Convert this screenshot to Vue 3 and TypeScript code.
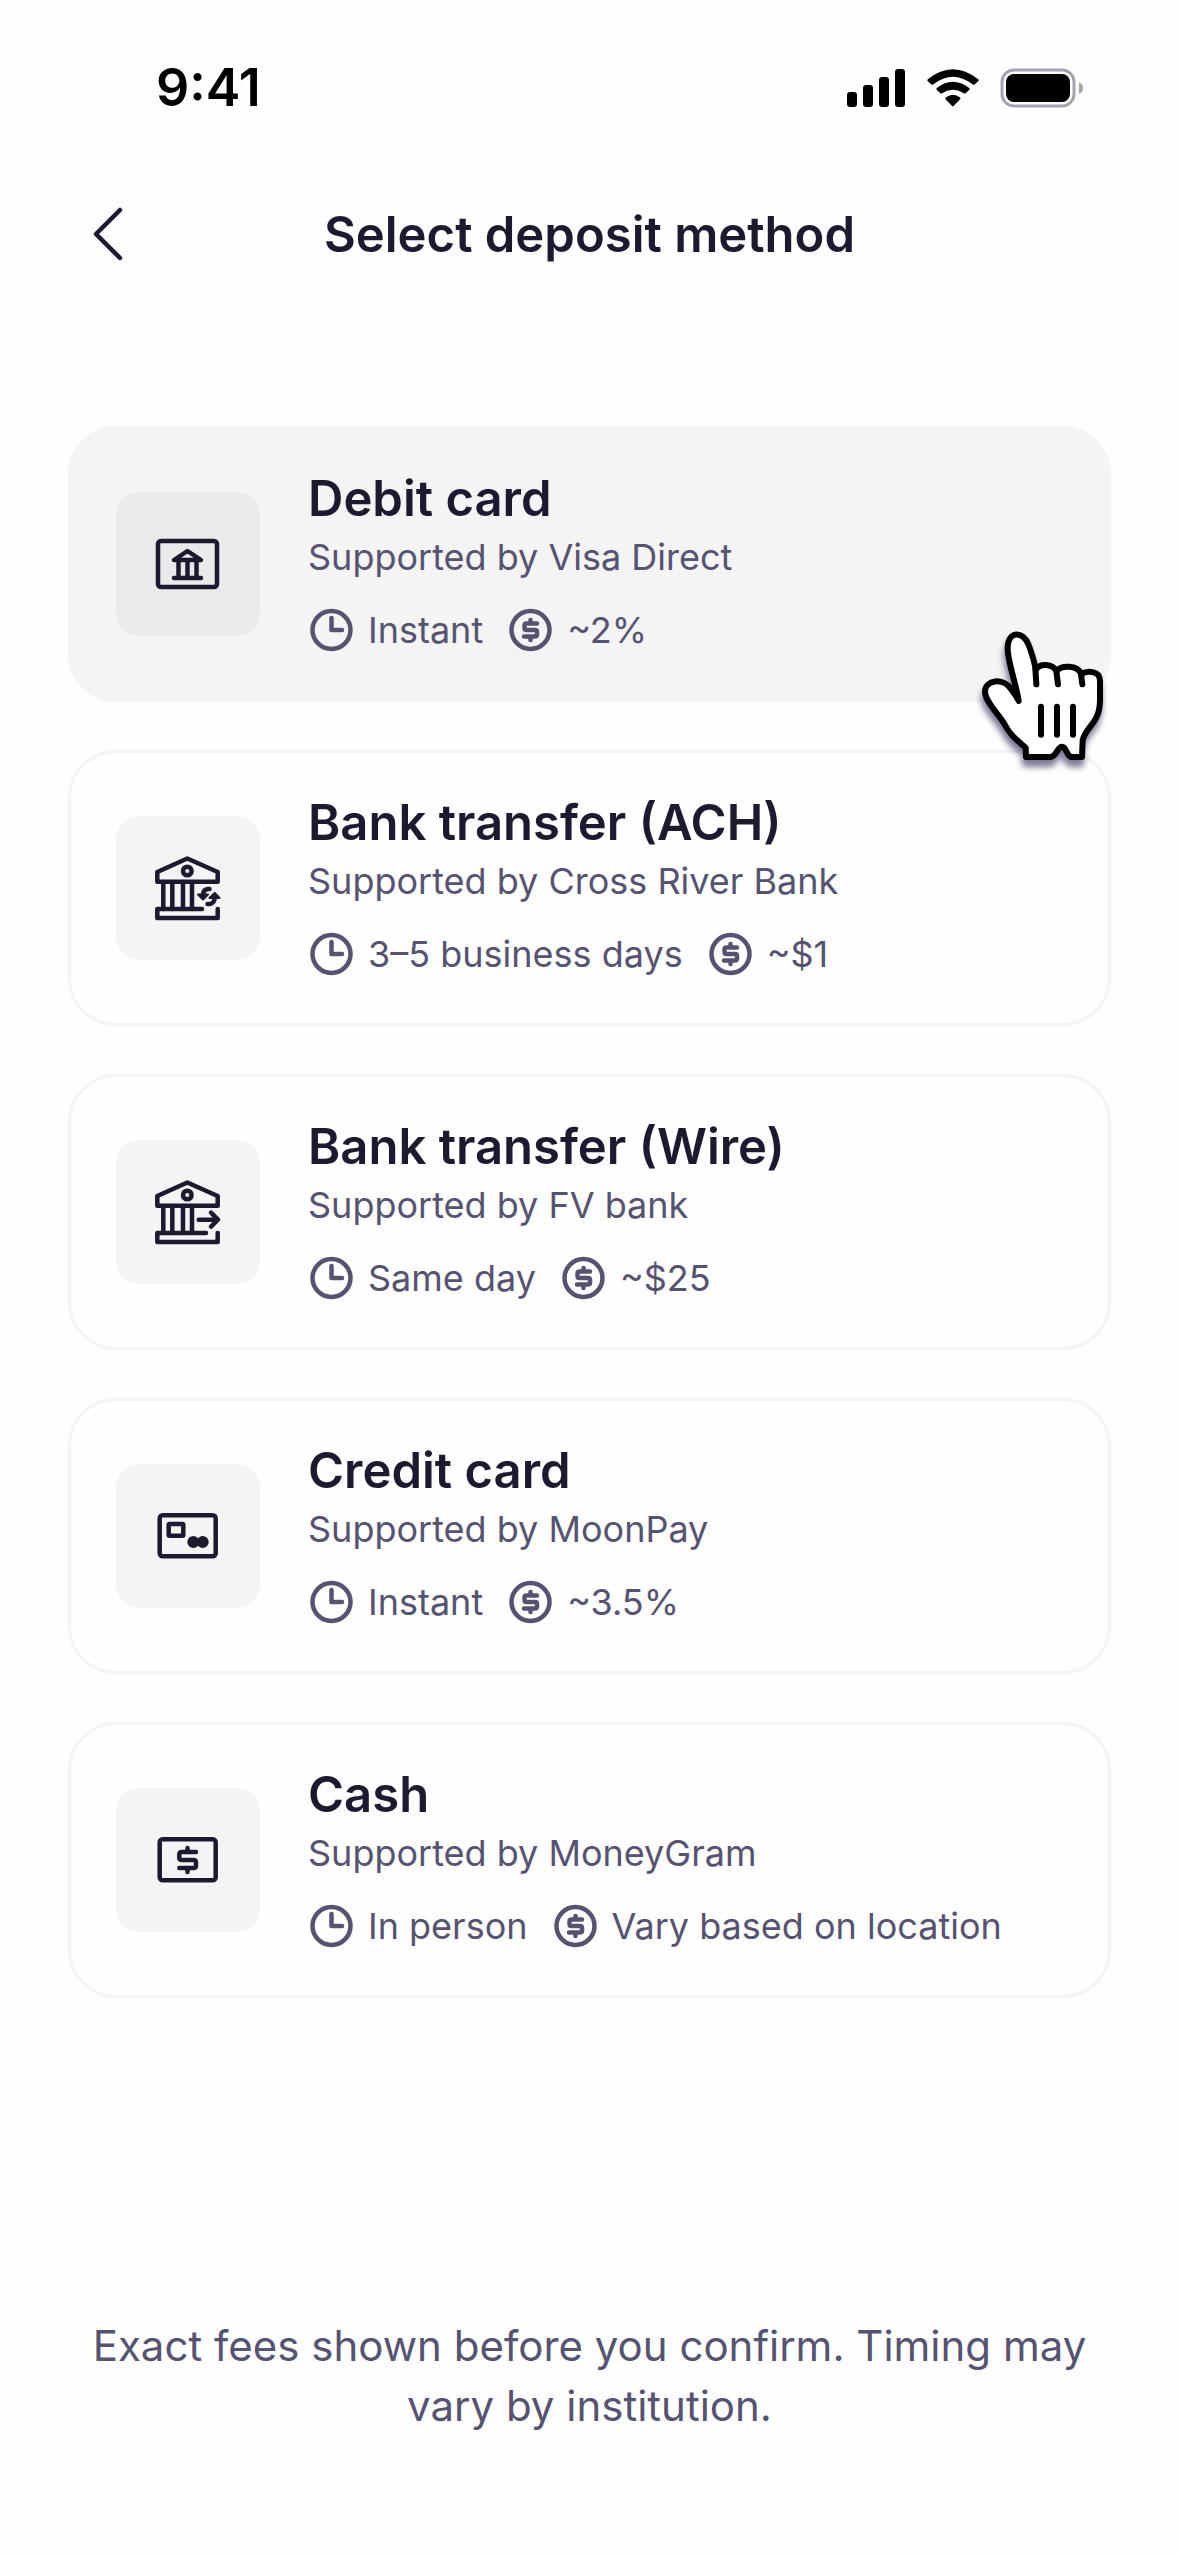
<script setup lang="ts">
type IconName = 'debit' | 'ach' | 'wire' | 'credit' | 'cash'

interface DepositMethod {
  id: IconName
  title: string
  provider: string
  timing: string
  fee: string
}

const methods: DepositMethod[] = [
  { id: 'debit', title: 'Debit card', provider: 'Visa Direct', timing: 'Instant', fee: '~2%' },
  { id: 'ach', title: 'Bank transfer (ACH)', provider: 'Cross River Bank', timing: '3–5 business days', fee: '~$1' },
  { id: 'wire', title: 'Bank transfer (Wire)', provider: 'FV bank', timing: 'Same day', fee: '~$25' },
  { id: 'credit', title: 'Credit card', provider: 'MoonPay', timing: 'Instant', fee: '~3.5%' },
  { id: 'cash', title: 'Cash', provider: 'MoneyGram', timing: 'In person', fee: 'Vary based on location' },
]

const activeId: IconName = 'debit'
</script>

<template>
  <div class="screen">
    <div class="status-bar">
      <span class="time">9:41</span>
      <div class="status-icons">
        <svg width="59" height="38" viewBox="0 0 59 38" aria-hidden="true">
          <rect x="0" y="23" width="10" height="15" rx="3" />
          <rect x="16" y="16" width="10" height="22" rx="3" />
          <rect x="32" y="8" width="10" height="30" rx="3" />
          <rect x="48" y="0" width="10" height="38" rx="3" />
        </svg>
        <svg width="52" height="38" viewBox="383 91 155 114" aria-hidden="true">
          <path d="M385 122Q460 62 536 122Q539 125 536 128L526 137Q523 140 519 137Q460 92 402 137Q398 140 395 137L385 128Q382 125 385 122Z" />
          <path d="M412 148Q460 110 509 148Q512 151 509 154L499 163Q496 166 492 163Q460 143 429 163Q425 166 422 163L412 154Q409 151 412 148Z" />
          <path d="M440 176Q460 160 481 176Q485 179 482 182L463 201Q460 204 457 201L438 182Q436 179 440 176Z" />
        </svg>
        <svg width="84" height="40" viewBox="0 0 84 40" aria-hidden="true">
          <rect x="2" y="2" width="72" height="36" rx="12" fill="none" stroke="#a6a3b1" stroke-width="3" />
          <rect x="6" y="6" width="64" height="28" rx="8" />
          <path d="M79 14Q83 16 83 20Q83 24 79 26Z" fill="#a6a3b1" />
        </svg>
      </div>
    </div>

    <header class="header">
      <button class="back" type="button" aria-label="Back">
        <svg width="36" height="56" viewBox="0 0 36 56" aria-hidden="true">
          <path d="M30 3L6 27L30 51" />
        </svg>
      </button>
      <h1>Select deposit method</h1>
    </header>

    <main>
      <ul class="methods">
        <li v-for="method in methods" :key="method.id">
          <button class="card" :class="{ active: method.id === activeId }" type="button">
            <span class="tile">
              <svg width="72" height="72" viewBox="0 0 72 72" aria-hidden="true">
                <template v-if="method.id === 'debit'">
                  <rect x="6" y="13" width="59" height="46" rx="3" />
                  <path d="M22 32L35.500 23L49 32ZM22 50H49M26.500 33V49M35.500 33V49M44.500 33V49" />
                </template>
                <template v-if="method.id === 'ach' || method.id === 'wire'">
                  <path d="M5.300 29.700V20L35.300 6.500L65.700 20V29.700Z" />
                  <circle cx="35.300" cy="19" r="4.300" />
                  <path d="M11.300 30V57M20.300 30V57M31 30V57M40 30V57" />
                </template>
                <template v-if="method.id === 'ach'">
                  <path d="M50 57H5.300V66H65.700V57" />
                  <path d="M57.500 37H56Q51.500 37.500 51 42M55.500 52H58Q62.500 51 62.700 46" />
                  <path class="solid small" d="M46 42.500H56L51 47.500ZM57.500 46H67.500L62.700 41Z" />
                </template>
                <template v-if="method.id === 'wire'">
                  <path d="M54 57H5.300V66H65.700V57" />
                  <path d="M46.700 43.700H65.700M59 36.700L66 43.700L59 50.700" />
                </template>
                <template v-if="method.id === 'credit'">
                  <rect x="7.700" y="15.300" width="56" height="41" rx="3" />
                  <rect x="16.700" y="24" width="14.600" height="11.700" rx="1" />
                  <circle class="solid small" cx="41.300" cy="42" r="5" />
                  <circle class="solid small" cx="50.700" cy="42" r="5" />
                </template>
                <template v-if="method.id === 'cash'">
                  <rect x="7.700" y="15.300" width="56" height="41" rx="3" />
                  <path d="M44 28H30Q27.300 28 27.300 30.500V33.500Q27.300 36 30 36H41.500Q44 36 44 38.500V41.500Q44 44 41.500 44H27.300M35.500 24V28M35.500 44V48" />
                </template>
              </svg>
            </span>
            <span class="body">
              <span class="title">{{ method.title }}</span>
              <span class="provider">Supported by {{ method.provider }}</span>
              <span class="meta">
                <span class="fact">
                  <svg width="48" height="48" viewBox="0 0 48 48" aria-hidden="true">
                    <circle cx="23.500" cy="24" r="19" />
                    <path d="M23.500 12V24H34" />
                  </svg>
                  {{ method.timing }}
                </span>
                <span class="fact">
                  <svg width="48" height="48" viewBox="0 0 48 48" aria-hidden="true">
                    <circle cx="23.500" cy="24" r="19" />
                    <path d="M30 17.500H19.500Q17.500 17.500 17.500 19.500V22Q17.500 24 19.500 24H28Q30 24 30 26V28.500Q30 30.500 28 30.500H17M23.500 14V17M23.500 31V34" />
                  </svg>
                  {{ method.fee }}
                </span>
              </span>
            </span>
          </button>
          <svg v-if="method.id === activeId" class="pointer" width="135" height="150" viewBox="108 84 405 450" aria-hidden="true">
            <path
              class="hand"
              d="M236 303C228 250 203 185 203 145C203 90 250 92 266 135C278 165 283 190 288 208C300 190 337 190 350 214C362 195 412 194 424 222C440 212 480 210 480 242V300C480 370 440 375 428 420L426 471H393C376 463 380 440 366 440C352 440 352 465 333 471H258L257 443C230 420 210 405 195 375C175 340 135 305 135 275C135 240 190 230 215 270Q230 288 236 303Z"
            />
            <path class="crease" d="M286 205L289 253M349 214L354 253M423 222L427 253M303 320V404M351 320V404M399 320V404" />
          </svg>
        </li>
      </ul>
    </main>

    <footer>
      <p>Exact fees shown before you confirm. Timing may vary by institution.</p>
    </footer>
  </div>
</template>

<style>
body {
  margin: 0;
  background: #fefefe;
}
</style>

<style scoped>
.screen {
  display: flex;
  flex-direction: column;
  min-height: 100vh;
  box-sizing: border-box;
  background: #fefefe;
  color: #1e192e;
  font-family: Inter, "Liberation Sans", sans-serif;
}

.status-bar {
  display: flex;
  align-items: center;
  justify-content: space-between;
  height: 176px;
  padding: 0 95px 0 156px;
  color: #000;
}

.time {
  font-size: 52px;
  font-weight: 600;
  line-height: 60px;
}

.status-icons {
  display: flex;
  align-items: center;
  gap: 21px;
}

.header {
  display: grid;
  grid-template-columns: 96px 1fr 96px;
  align-items: center;
  height: 118px;
  padding: 0 60px;
}

.back {
  display: flex;
  align-items: center;
  justify-content: center;
  height: 96px;
  padding: 0;
  border: 0;
  background: none;
}

.back svg {
  fill: none;
  stroke: #1e192e;
  stroke-width: 4.5;
  stroke-linecap: round;
  stroke-linejoin: round;
}

h1 {
  margin: 0;
  font-size: 49px;
  font-weight: 600;
  line-height: 60px;
  text-align: center;
}

main {
  padding: 132px 68px 48px;
}

.methods {
  display: flex;
  flex-direction: column;
  gap: 48px;
  margin: 0;
  padding: 0;
  list-style: none;
}

li {
  position: relative;
}

.card {
  display: flex;
  align-items: center;
  gap: 48px;
  width: 100%;
  padding: 42px 45px;
  border: 3px solid #f4f4f4;
  border-radius: 48px;
  background: #fefefe;
  color: inherit;
  font: inherit;
  text-align: left;
}

.card.active {
  background: #f4f4f4;
}

.tile {
  display: flex;
  flex: none;
  align-items: center;
  justify-content: center;
  width: 144px;
  height: 144px;
  border-radius: 24px;
  background: #f4f4f4;
}

.active .tile {
  background: #eaeaea;
}

.tile svg {
  fill: none;
  stroke: #1e192e;
  stroke-width: 4.5;
  stroke-linecap: round;
  stroke-linejoin: round;
}

.tile .solid {
  fill: #1e192e;
}

.tile .small {
  stroke-width: 2;
}

.body {
  display: flex;
  flex-direction: column;
}

.title {
  margin-bottom: 8px;
  font-size: 49px;
  font-weight: 600;
  line-height: 56px;
}

.provider {
  margin-bottom: 24px;
  color: #565370;
  font-size: 36px;
  line-height: 44px;
}

.meta {
  display: flex;
  gap: 24px;
  color: #565370;
  font-size: 36px;
  line-height: 54px;
}

.fact {
  display: flex;
  align-items: center;
  gap: 12px;
}

.fact svg {
  flex: none;
  fill: none;
  stroke: currentColor;
  stroke-width: 4.5;
  stroke-linecap: round;
  stroke-linejoin: round;
}

.pointer {
  position: absolute;
  right: 0;
  bottom: -76px;
  z-index: 1;
  filter: drop-shadow(-1px 7px 3px rgba(40, 32, 84, 0.6));
  pointer-events: none;
}

.hand,
.crease {
  stroke: #000;
  stroke-width: 18;
  stroke-linecap: round;
  stroke-linejoin: round;
}

.hand {
  fill: #fff;
}

.crease {
  fill: none;
}

footer {
  margin-top: auto;
  padding: 0 90px 120px;
  color: #565370;
  font-size: 42px;
  line-height: 60px;
  text-align: center;
}

footer p {
  margin: 0;
}
</style>
